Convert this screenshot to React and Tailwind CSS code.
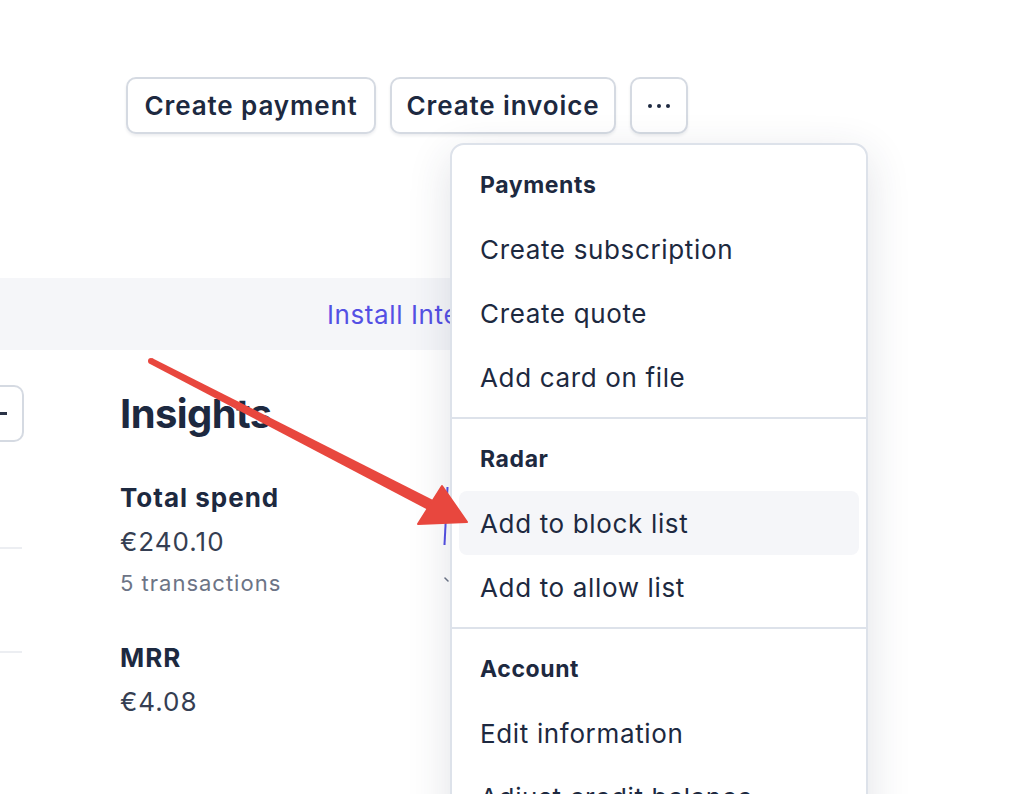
import React from 'react';

const ink = 'text-[#1d2940]';

const sections = [
  { title: 'Payments', items: ['Create subscription', 'Create quote', 'Add card on file'] },
  { title: 'Radar', items: ['Add to block list', 'Add to allow list'] },
  { title: 'Account', items: ['Edit information', 'Adjust credit balance'] },
];

const ActionButton = ({ children, className = '' }) => (
  <button
    className={`flex h-[57px] items-center justify-center rounded-[10px] border-2 border-[#d5dae2] bg-white text-[26px] font-semibold tracking-[0.9px] shadow-[0_2px_3px_rgba(30,40,70,0.08)] ${ink} ${className}`}
  >
    {children}
  </button>
);

// dropdown menu that hangs off the "more" button
const MoreMenu = () => (
  <div className="absolute left-[450px] top-[143px] z-10 h-[720px] w-[418px] rounded-[14px] border-2 border-[#dde2ea] bg-white shadow-[0_12px_44px_rgba(40,50,80,0.14)]">
    {sections.map((section, i) => (
      <div key={section.title} className={i > 0 ? 'border-t-2 border-[#dde2ea]' : ''}>
        <div className="py-2">
          <div className={`flex h-16 items-center px-[28px] text-[23px] font-bold tracking-[0.6px] ${ink}`}>{section.title}</div>
          {section.items.map((item) => (
            <div
              key={item}
              className={`mx-[7px] flex h-16 items-center rounded-lg px-[21px] text-[26px] tracking-[0.65px] ${ink} ${
                item === 'Add to block list' ? 'bg-[#f5f6f9]' : ''
              }`}
            >
              {item}
            </div>
          ))}
        </div>
      </div>
    ))}
  </div>
);

// red annotation arrow drawn over the screenshot
const Arrow = () => (
  <svg className="pointer-events-none absolute left-0 top-0 z-20" width="1026" height="794" viewBox="0 0 1026 794">
    <circle cx="151" cy="361" r="3" fill="#e8473e" />
    <polygon points="152.4,358.3 149.6,363.7 432,512 437,502" fill="#e8473e" />
    <polygon points="467,522 418,524 442,486" fill="#e8473e" stroke="#e8473e" strokeWidth="2" strokeLinejoin="round" />
  </svg>
);

export default function App() {
  return (
    <div className="relative h-[794px] w-[1026px] overflow-hidden bg-white" style={{ fontFamily: 'Inter, "Noto Sans", sans-serif' }}>
      {/* header actions */}
      <div className="flex gap-[14px] pl-[126px] pt-[77px]">
        <ActionButton className="w-[250px]">Create payment</ActionButton>
        <ActionButton className="w-[226px] tracking-[0.5px]">Create invoice</ActionButton>
        <ActionButton className="w-[58px] gap-[5px]">
          <span className="h-[4px] w-[4px] rounded-full bg-[#1d2940]" />
          <span className="h-[4px] w-[4px] rounded-full bg-[#1d2940]" />
          <span className="h-[4px] w-[4px] rounded-full bg-[#1d2940]" />
        </ActionButton>
      </div>

      {/* banner */}
      <div className="mt-[144px] flex h-[72px] w-[860px] items-center bg-[#f5f6f9] pl-[327px] text-[26px] tracking-[0.6px] text-[#5450e4]">
        Install Integration
      </div>

      <div className="flex">
        {/* left column, cut off */}
        <div className="w-[24px]">
          <div className="mt-[35px] flex h-[57px] w-[24px] items-center rounded-r-[10px] border-2 border-l-0 border-[#d5dae2]">
            <span className="h-[3px] w-[7px] bg-[#2a3346]" />
          </div>
          <div className="mt-[105px] h-[2px] w-[22px] bg-[#eceef2]" />
          <div className="mt-[102px] h-[2px] w-[22px] bg-[#eceef2]" />
        </div>

        {/* insights */}
        <div className={`ml-[96px] w-[324px] ${ink}`}>
          <h2 className="mt-[40px] text-[40px] font-bold leading-[48px] tracking-[-0.6px]">Insights</h2>
          <div className="mt-[44px] text-[26px] font-bold leading-[32px] tracking-[1px]">Total spend</div>
          <div className="mt-[12px] text-[26px] leading-[32px] tracking-[1px] text-[#353e52]">€240.10</div>
          <div className="mt-[11px] text-[22px] leading-[28px] tracking-[1px] text-[#6c7486]">5 transactions</div>
          <div className="mt-[45px] text-[26px] font-bold leading-[32px] tracking-[1px]">MRR</div>
          <div className="mt-[12px] text-[26px] leading-[32px] tracking-[1px] text-[#353e52]">€4.08</div>
        </div>

        {/* chart fragment peeking out from under the menu */}
        <div className="flex flex-col items-start">
          <div className="ml-[1px] mt-[137px] h-[58px] w-[2px] rotate-[3deg] bg-[#5450e4]" />
          <svg className="mt-[32px]" width="6" height="6" viewBox="0 0 6 6">
            <line x1="1" y1="1" x2="4" y2="4" stroke="#6c7486" strokeWidth="1.5" strokeLinecap="round" />
          </svg>
        </div>
      </div>

      <MoreMenu />
      <Arrow />
    </div>
  );
}
